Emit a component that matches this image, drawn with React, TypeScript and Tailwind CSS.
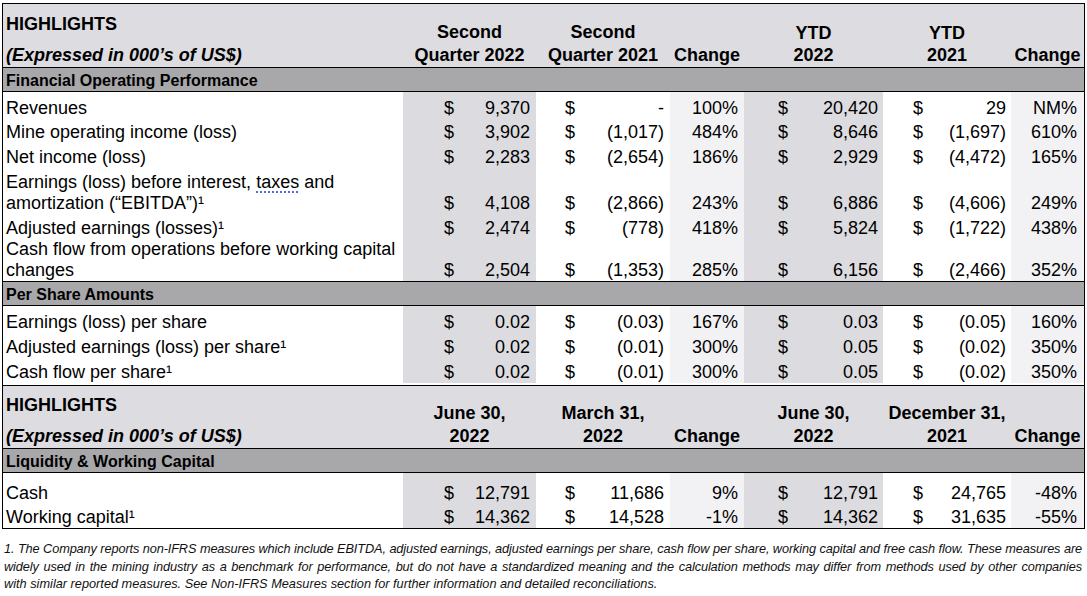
import React from "react";

type Row = {
  label: React.ReactNode;
  h: string;
  a: string;
  b: string;
  c: string;
  d: string;
  e: string;
  f: string;
};

const COLS = "grid grid-cols-[400px_133px_134px_74px_139px_128px_73px]";
const MED = "bg-[#dcdbdf]";
const LIGHT = "bg-[#f2f1f4]";

const OPERATING: Row[] = [
  { label: "Revenues", h: "h-[27px]", a: "9,370", b: "-", c: "100%", d: "20,420", e: "29", f: "NM%" },
  { label: "Mine operating income (loss)", h: "h-[24px]", a: "3,902", b: "(1,017)", c: "484%", d: "8,646", e: "(1,697)", f: "610%" },
  { label: "Net income (loss)", h: "h-[25px]", a: "2,283", b: "(2,654)", c: "186%", d: "2,929", e: "(4,472)", f: "165%" },
  {
    label: (
      <>
        Earnings (loss) before interest,{" "}
        <span className="underline decoration-dotted decoration-[#5566e6] decoration-2 underline-offset-[3px]">taxes</span> and
        <br />
        amortization (“EBITDA”)¹
      </>
    ),
    h: "h-[46px]",
    a: "4,108",
    b: "(2,866)",
    c: "243%",
    d: "6,886",
    e: "(4,606)",
    f: "249%",
  },
  { label: "Adjusted earnings (losses)¹", h: "h-[25px]", a: "2,474", b: "(778)", c: "418%", d: "5,824", e: "(1,722)", f: "438%" },
  {
    label: (
      <>
        Cash flow from operations before working capital
        <br />
        changes
      </>
    ),
    h: "h-[42px]",
    a: "2,504",
    b: "(1,353)",
    c: "285%",
    d: "6,156",
    e: "(2,466)",
    f: "352%",
  },
];

const PER_SHARE: Row[] = [
  { label: "Earnings (loss) per share", h: "h-[27px]", a: "0.02", b: "(0.03)", c: "167%", d: "0.03", e: "(0.05)", f: "160%" },
  { label: "Adjusted earnings (loss) per share¹", h: "h-[25px]", a: "0.02", b: "(0.01)", c: "300%", d: "0.05", e: "(0.02)", f: "350%" },
  { label: "Cash flow per share¹", h: "h-[27px] pb-[2px]", a: "0.02", b: "(0.01)", c: "300%", d: "0.05", e: "(0.02)", f: "350%" },
];

const LIQUIDITY: Row[] = [
  { label: "Cash", h: "h-[31px]", a: "12,791", b: "11,686", c: "9%", d: "12,791", e: "24,765", f: "-48%" },
  { label: "Working capital¹", h: "h-[24px]", a: "14,362", b: "14,528", c: "-1%", d: "14,362", e: "31,635", f: "-55%" },
];

function Money({ value, className }: { value: string; className: string }) {
  return (
    <div className={`flex items-end justify-between ${className}`}>
      <span>$</span>
      <span>{value}</span>
    </div>
  );
}

function DataRow({ row }: { row: Row }) {
  return (
    <div className={`${COLS} ${row.h} text-[18px] leading-[21px]`}>
      <div className="flex items-end pl-[3px]">
        <div>{row.label}</div>
      </div>
      <Money value={row.a} className={`${MED} pl-[41px] pr-[6px]`} />
      <Money value={row.b} className="pl-[29px] pr-[6px]" />
      <div className={`flex items-end justify-end pr-[6px] ${LIGHT}`}>{row.c}</div>
      <Money value={row.d} className={`${MED} pl-[34px] pr-[5px]`} />
      <Money value={row.e} className="pl-[30px] pr-[5px]" />
      <div className={`flex items-end justify-end pr-[7px] ${LIGHT}`}>{row.f}</div>
    </div>
  );
}

function SectionBar({ title }: { title: string }) {
  return (
    <div className="h-[24px] border-b border-black bg-[#a8a7aa] pl-[3px] pt-[2px] text-[16px] font-bold leading-[22px]">
      {title}
    </div>
  );
}

type HeadCol = { top?: string; bottom: string; topLeading?: string };

function HeadCell({ top, bottom, topLeading = "leading-[23px]" }: HeadCol) {
  return (
    <div className="flex flex-col items-center justify-end text-center">
      {top && <div className={topLeading}>{top}</div>}
      <div className="leading-[23px]">{bottom}</div>
    </div>
  );
}

function Header({ cols, h }: { cols: HeadCol[]; h: string }) {
  return (
    <div className={`${COLS} ${h} border-b border-black bg-[#dddce0] text-[18px] font-bold`}>
      <div className="flex flex-col justify-end pl-[3px]">
        <div className="leading-[23px]">HIGHLIGHTS</div>
        <div className="mt-[8px] italic leading-[23px]">(Expressed in 000’s of US$)</div>
      </div>
      {cols.map((c, i) => (
        <HeadCell key={i} {...c} />
      ))}
    </div>
  );
}

export default function App() {
  return (
    <div className="min-h-[596px] bg-white pl-[2px] pt-[3px] font-['Liberation_Sans',Arial,sans-serif] text-black">
      <div className="w-[1083px] border border-black">
        <Header
          h="h-[64px]"
          cols={[
            { top: "Second", bottom: "Quarter 2022" },
            { top: "Second", bottom: "Quarter 2021" },
            { bottom: "Change" },
            { top: "YTD", bottom: "2022", topLeading: "leading-[21px]" },
            { top: "YTD", bottom: "2021", topLeading: "leading-[21px]" },
            { bottom: "Change" },
          ]}
        />
        <SectionBar title="Financial Operating Performance" />
        <div className="border-b border-black">
          {OPERATING.map((r, i) => (
            <DataRow key={i} row={r} />
          ))}
        </div>
        <SectionBar title="Per Share Amounts" />
        <div className="border-b border-black">
          {PER_SHARE.map((r, i) => (
            <DataRow key={i} row={r} />
          ))}
        </div>
        <Header
          h="h-[63px]"
          cols={[
            { top: "June 30,", bottom: "2022" },
            { top: "March 31,", bottom: "2022" },
            { bottom: "Change" },
            { top: "June 30,", bottom: "2022" },
            { top: "December 31,", bottom: "2021" },
            { bottom: "Change" },
          ]}
        />
        <SectionBar title="Liquidity & Working Capital" />
        <div>
          {LIQUIDITY.map((r, i) => (
            <DataRow key={i} row={r} />
          ))}
        </div>
      </div>

      <div className="mt-[11px] w-[1080px] pl-[2px] text-[12.75px] italic leading-[17.5px] text-[#111]">
        <div className="whitespace-nowrap tracking-[-0.12px] text-justify [text-align-last:justify]">
          1. The Company reports non-IFRS measures which include EBITDA, adjusted earnings, adjusted earnings per share, cash flow per share, working capital and free cash flow. These measures are
        </div>
        <div className="whitespace-nowrap tracking-[-0.12px] text-justify [text-align-last:justify]">
          widely used in the mining industry as a benchmark for performance, but do not have a standardized meaning and the calculation methods may differ from methods used by other companies
        </div>
        <div className="whitespace-nowrap">
          with similar reported measures. See Non-IFRS Measures section for further information and detailed reconciliations.
        </div>
      </div>
    </div>
  );
}
